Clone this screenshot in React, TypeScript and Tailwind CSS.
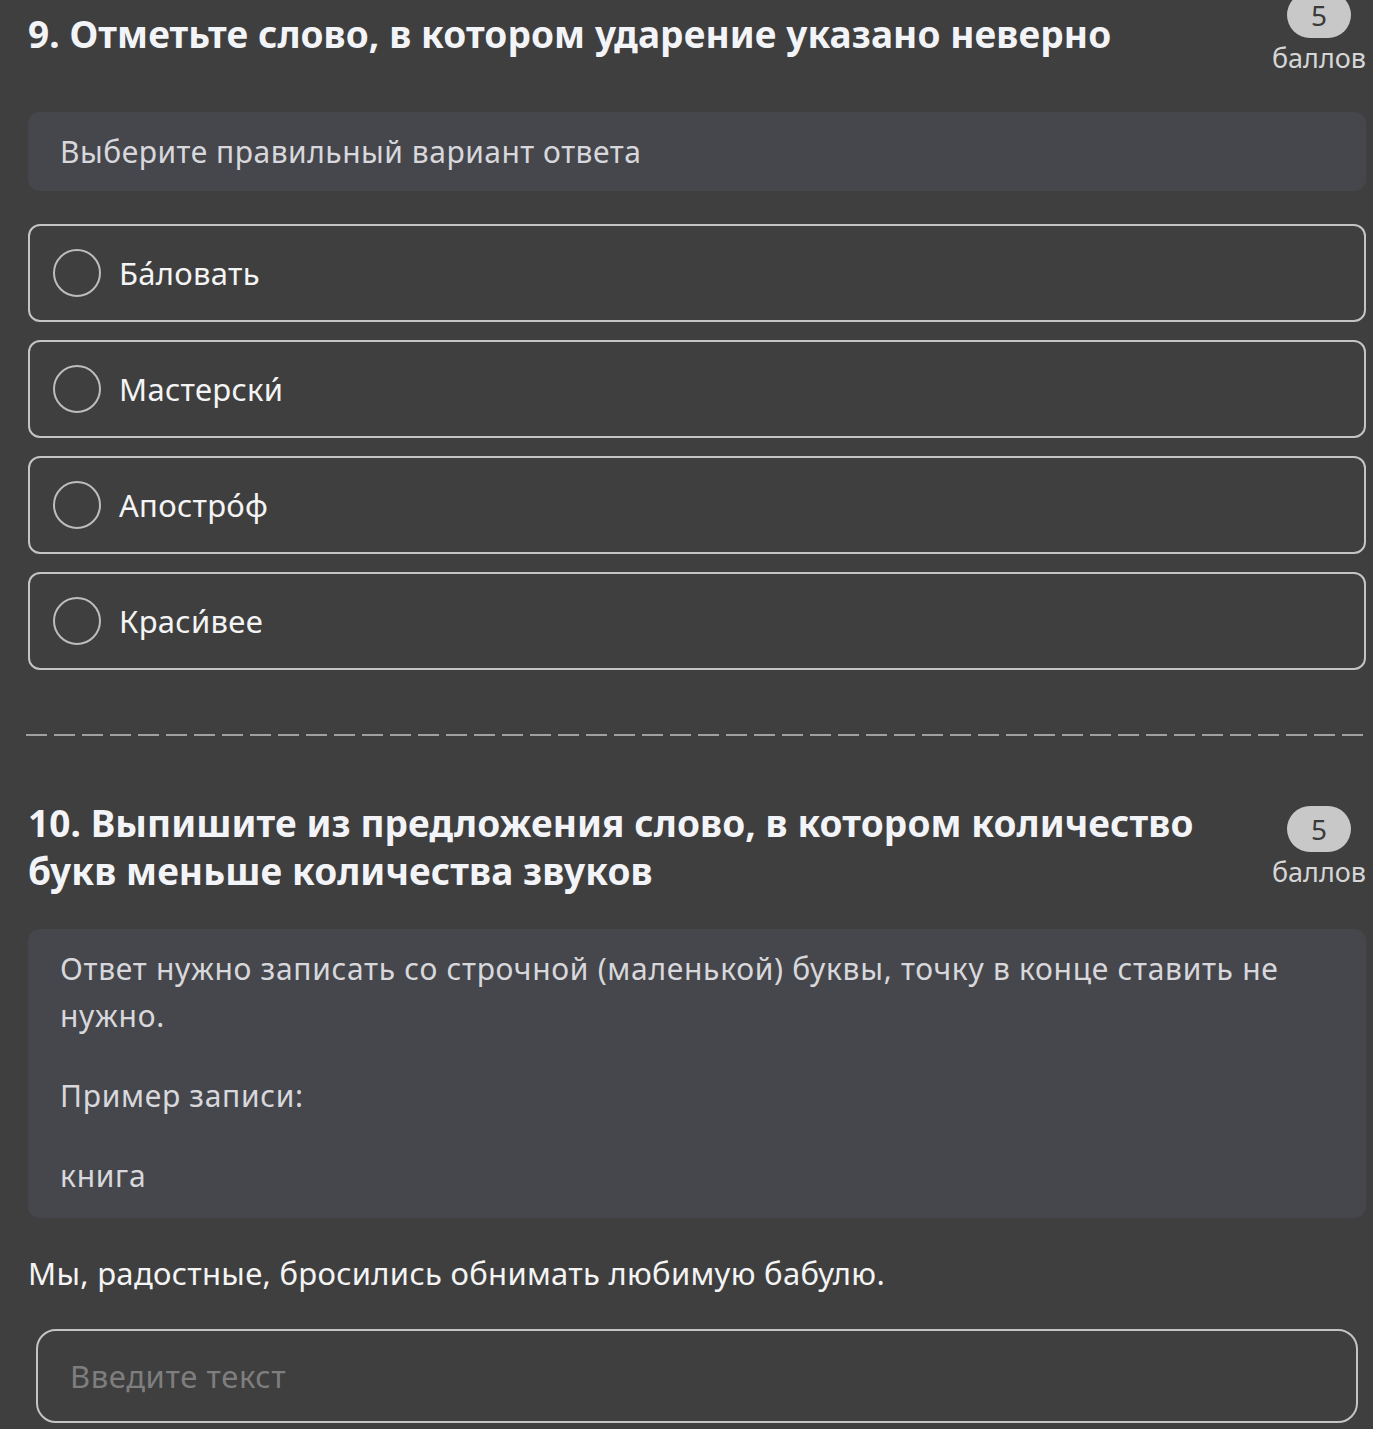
import React from "react";

const font = { fontFamily: '"Noto Sans", "Open Sans", "DejaVu Sans", sans-serif' };

function Badge() {
  return (
    <div className="flex flex-col items-center shrink-0 w-[94px]">
      <div className="w-[64px] h-[46px] rounded-full bg-[#c8c8c8] flex items-center justify-center text-[28px] text-[#3a3a3a] leading-none">
        5
      </div>
      <div className="text-[27px] text-[#d6d6d6] leading-[27px] mt-[6px]">баллов</div>
    </div>
  );
}

function Option({ label }: { label: string }) {
  return (
    <div className="h-[98px] rounded-[12px] border-2 border-[#c4c4c4] flex items-center pl-[23px] gap-[18px]">
      <div className="w-[48px] h-[48px] rounded-full border-2 border-[#bdbdbd] shrink-0" />
      <div className="text-[31px] tracking-[0.3px] text-[#f4f4f4] leading-none">{label}</div>
    </div>
  );
}

export default function App() {
  return (
    <div style={font} className="w-[1373px] min-h-[1429px] bg-[#3f3f3f] pl-[28px] pr-[7px] overflow-hidden">
      {/* Q9 */}
      <div className="flex justify-between items-start">
        <h2 className="text-[37px] font-bold text-[#f3f4f8] leading-[48px] pt-[10px] tracking-[0.1px]">
          9. Отметьте слово, в котором ударение указано неверно
        </h2>
        <div className="-mt-[8px]">
          <Badge />
        </div>
      </div>
      <div className="mt-[41px] rounded-[12px] bg-[#46474c] h-[79px] flex items-center pl-[32px] text-[30px] tracking-[0.5px] text-[#d8d8dc]">
        Выберите правильный вариант ответа
      </div>
      <div className="mt-[33px] flex flex-col gap-[18px]">
        <Option label={"Ба\u0301ловать"} />
        <Option label={"Мастерски\u0301"} />
        <Option label={"Апостро\u0301ф"} />
        <Option label={"Краси\u0301вее"} />
      </div>

      <div className="mt-[64px] -ml-[2px] h-[2px] bg-[repeating-linear-gradient(to_right,#a0a0a0_0px,#a0a0a0_21px,transparent_21px,transparent_28px)]" />

      {/* Q10 */}
      <div className="mt-[63px] flex justify-between items-start">
        <h2 className="text-[37px] font-bold text-[#f3f4f8] leading-[48px] w-[1215px] tracking-[0.1px]">
          10. Выпишите из предложения слово, в котором количество букв меньше количества звуков
        </h2>
        <div className="mt-[7px]">
          <Badge />
        </div>
      </div>
      <div className="mt-[34px] rounded-[12px] bg-[#46474c] pl-[32px] pr-[40px] pt-[16px] pb-[19px] text-[30px] tracking-[0.7px] text-[#d8d8dc] leading-[47px]">
        <p>Ответ нужно записать со строчной (маленькой) буквы, точку в конце ставить не нужно.</p>
        <p className="mt-[33px]">Пример записи:</p>
        <p className="mt-[33px]">книга</p>
      </div>
      <p className="mt-[35px] text-[31px] tracking-[0.3px] text-[#f4f4f4] leading-[40px]">
        Мы, радостные, бросились обнимать любимую бабулю.
      </p>
      <div className="mt-[36px] ml-[8px] mr-[8px] h-[94px] rounded-[20px] border-2 border-[#c4c4c4] flex items-center pl-[32px] text-[31px] tracking-[0.6px] text-[#7e7e7e]">
        Введите текст
      </div>
    </div>
  );
}
